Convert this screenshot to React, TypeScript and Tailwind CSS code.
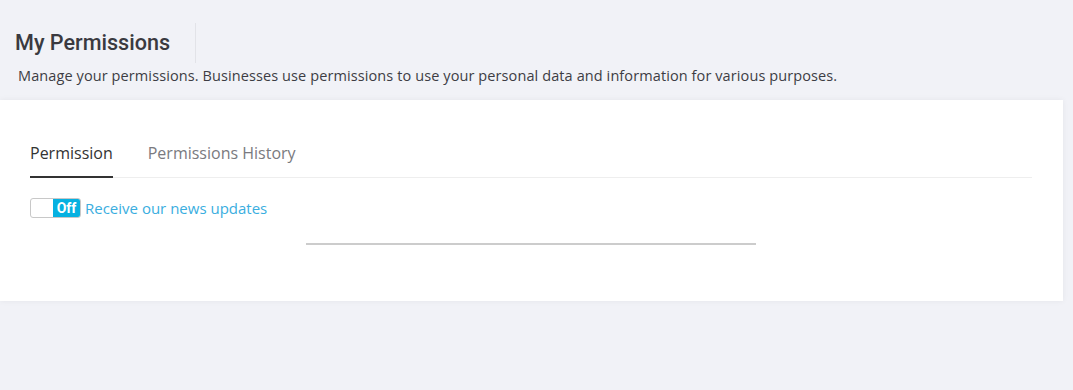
import React from "react";

export default function App() {
  return (
    <div className="w-[1073px] h-[390px] bg-[#f1f2f7] overflow-hidden" style={{ fontFamily: '"Open Sans", sans-serif' }}>
      <div className="flex items-center h-[40px] mt-[23px] pl-[15px]">
        <h1 className="text-[21.6px] font-medium text-[#3a3a40] leading-none pr-[25px] h-[40px] flex items-center border-r border-[#e2e3e8]" style={{ fontFamily: 'Roboto, sans-serif' }}>
          My Permissions
        </h1>
      </div>
      <p className="pl-[18px] mt-[3px] text-[14.5px] text-[#3d3d44] leading-[20px] tracking-[0.1px]">
        Manage your permissions. Businesses use permissions to use your personal data and information for various purposes.
      </p>
      <div className="mt-[14px] w-[1063px] h-[201px] bg-white shadow-[0_0_6px_rgba(0,0,0,0.06)] px-[30px] pt-[40px]">
        <div className="flex w-[1002px] border-b border-[#eeeeee] text-[16px]">
          <div className="pb-[10px] border-b-2 border-[#333] -mb-px text-[#333] leading-[26px]">Permission</div>
          <div className="ml-[35px] pb-[10px] text-[#7a7a80] leading-[26px]">Permissions History</div>
        </div>
        <div className="flex items-center mt-[20px]">
          <div className="w-[51px] h-[20px] rounded-[3px] border border-[#c8c8c8] flex justify-end overflow-hidden">
            <div className="w-[27px] h-full bg-[#06b1e1] text-white text-[14px] font-bold flex items-center justify-center leading-none" style={{ fontFamily: 'Roboto, sans-serif' }}>Off</div>
          </div>
          <span className="ml-[4px] text-[15px] text-[#3aaee0] leading-[20px]">Receive our news updates</span>
        </div>
        <div className="ml-[276px] mt-[25px] w-[450px] h-[2px] bg-[#cccccc]" />
      </div>
    </div>
  );
}
